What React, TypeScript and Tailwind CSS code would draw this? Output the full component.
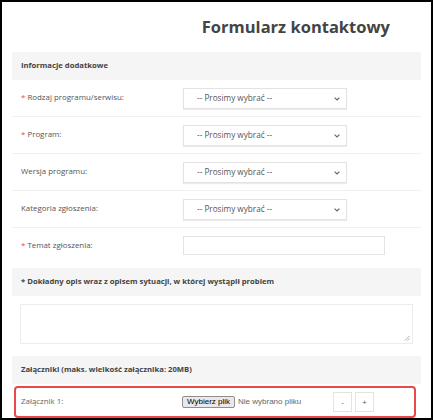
import React from 'react';

const fields = [
  { label: 'Rodzaj programu/serwisu:', required: true, type: 'select' },
  { label: 'Program:', required: true, type: 'select' },
  { label: 'Wersja programu:', required: false, type: 'select' },
  { label: 'Kategoria zgłoszenia:', required: false, type: 'select' },
];

function SelectBox() {
  return (
    <div className="relative w-[164px] h-[21px] border border-[#e3e3e3] bg-white shadow-[0_1px_1px_rgba(0,0,0,0.08)] flex items-center pl-[13px] text-[8.2px] text-[#555]">
      <span>-- Prosimy wybrać --</span>
      <svg className="absolute right-[6px] top-[8px]" width="6" height="4" viewBox="0 0 6 4">
        <path d="M0.6 0.6 L3 3 L5.4 0.6" fill="none" stroke="#666" strokeWidth="1.1" />
      </svg>
    </div>
  );
}

function Band({ children }: { children: React.ReactNode }) {
  return (
    <div className="h-[28px] bg-[#f5f5f5] px-[9px] flex items-center text-[7.7px] font-bold text-[#444]">
      {children}
    </div>
  );
}

function Label({ text, required }: { text: string; required: boolean }) {
  return (
    <div className="w-[162px] text-[7.9px] text-[#555]">
      {required && <span className="text-[#e74c3c]">* </span>}
      {text}
    </div>
  );
}

export default function App() {
  return (
    <div className="w-[433px] h-[420px] border-2 border-black bg-white overflow-hidden font-['Open_Sans',sans-serif]">
      <div className="h-[50px] flex items-center justify-end pr-[41px]">
        <h1 className="text-[16.5px] font-bold text-[#444] leading-none">Formularz kontaktowy</h1>
      </div>

      <div className="mx-[10px]">
        <Band>Informacje dodatkowe</Band>

        {fields.map((f) => (
          <div key={f.label} className="h-[37px] border-b border-[#f0f0f0] flex items-center px-[9px]">
            <Label text={f.label} required={f.required} />
            <SelectBox />
          </div>
        ))}

        <div className="h-[35px] flex items-center px-[9px]">
          <Label text="Temat zgłoszenia:" required />
          <div className="w-[202px] h-[19px] border border-[#e3e3e3] bg-white" />
        </div>

        <div className="mt-[5px]">
          <Band>* Dokładny opis wraz z opisem sytuacji, w której wystąpił problem</Band>
        </div>

        <div className="relative mt-[8px] mx-[8px] h-[40px] border border-[#ececec] bg-white">
          <svg className="absolute right-[2px] bottom-[2px]" width="6" height="6" viewBox="0 0 6 6">
            <path d="M5.5 1 L1 5.5 M5.5 3.5 L3.5 5.5" stroke="#999" strokeWidth="0.8" />
          </svg>
        </div>

        <div className="mt-[12px]">
          <Band>Załączniki (maks. wielkość załącznika: 20MB)</Band>
        </div>

        <div className="mt-[2px] ml-[2px] w-[402px] h-[32px] border-2 border-[#e9484d] rounded-[4px] flex items-center pl-[5px]">
          <div className="w-[161px] text-[7.9px] text-[#666]">Załącznik 1:</div>
          <div className="w-[151px] flex items-center font-['Liberation_Sans',sans-serif] text-[8px]">
            <span className="h-[12px] px-[4px] flex items-center border border-[#8f8f8f] rounded-[2px] bg-[#e9e9ed] text-black">
              Wybierz plik
            </span>
            <span className="ml-[3px] text-[#666]">Nie wybrano pliku</span>
          </div>
          <div className="w-[19px] h-[20px] border border-[#e3e3e3] flex items-center justify-center text-[8px] text-[#555]">-</div>
          <div className="ml-[3px] w-[19px] h-[20px] border border-[#e3e3e3] flex items-center justify-center text-[8px] text-[#555]">+</div>
        </div>
      </div>
    </div>
  );
}
